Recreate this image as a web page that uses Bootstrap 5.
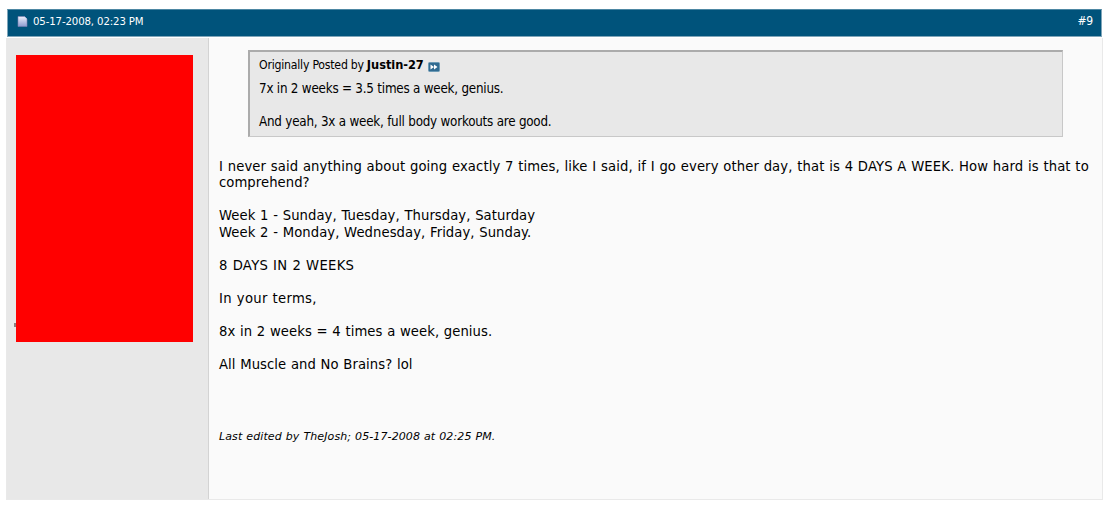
<!DOCTYPE html>
<html lang="en">

<head>
    <meta charset="UTF-8">
    <meta name="viewport" content="width=device-width, initial-scale=1.0">
    <title>Post #9</title>
    <link href="https://cdn.jsdelivr.net/npm/bootstrap@5.3.0/dist/css/bootstrap.min.css" rel="stylesheet">
    <style>
        body {
            background: #fff;
            color: #000;
            font-family: "DejaVu Sans", Verdana, sans-serif;
            overflow: hidden;
        }

        .post {
            width: 1097px;
            margin: 9px 0 0 6px;
        }

        .post-head {
            width: 1095px;
            height: 28px;
            margin: 0 0 1px 1px;
            padding: 0 8px 3px 9px;
            background: #00537b;
            border: 1px solid #7fa5b9;
            border-top-color: #4d87a3;
            color: #fff;
        }

        .tahoma {
            font-family: "DejaVu Sans Condensed", "DejaVu Sans", Tahoma, sans-serif;
            font-stretch: condensed;
        }

        .post-date {
            margin-left: 5px;
            padding-top: 1px;
            font-size: 11.3px;
            letter-spacing: -.12px;
        }

        .post-number {
            padding-bottom: 2px;
            font-size: 12px;
            letter-spacing: -.2px;
        }

        .post-body {
            height: 462px;
            background: #fafafa;
            border: 1px solid #e9e9e9;
            border-top: 0;
        }

        .user-info {
            width: 202px;
            padding: 17px 0 0 9px;
            background: #e8e8e8;
            border-right: 1px solid #d3d3d3;
        }

        .user-cover {
            width: 177px;
            height: 287px;
            background: #f00;
        }

        .speck {
            left: -2px;
            top: 268px;
            width: 2px;
            height: 4px;
            background: #8c8080;
        }

        .post-content {
            padding: 12px 10px 0 10px;
        }

        .quote {
            width: 815px;
            height: 87px;
            margin-left: 29px;
            padding: 5px 9px;
            background: #e8e8e8;
            border: 1px solid #c8c8c8;
            border-top: 2px solid #ababab;
            border-left: 2px solid #ababab;
            font-size: 13.3px;
            line-height: 16.5px;
        }

        .quote-by {
            font-size: 12.2px;
            letter-spacing: -.23px;
        }

        .quote-name {
            margin-left: 3px;
            font-size: 12.7px;
            letter-spacing: -.05px;
        }

        .quote-text {
            margin-top: 7px;
            letter-spacing: -.22px;
        }

        .message {
            margin-top: 21.5px;
            font-size: 13.2px;
            line-height: 16.5px;
            letter-spacing: .06px;
            word-spacing: .45px;
        }

        .wide {
            letter-spacing: .1px;
        }

        .caps {
            letter-spacing: .3px;
        }

        .edited {
            margin-top: 56px;
            font-size: 11px;
            line-height: 16px;
            letter-spacing: .1px;
            word-spacing: .4px;
        }
    </style>
</head>

<body>
    <div class="post">
        <div class="post-head d-flex align-items-center justify-content-between">
            <div class="d-flex align-items-center">
                <svg width="11" height="11" viewBox="0 0 11 11">
                    <defs>
                        <linearGradient id="page" x1="0" y1="0" x2="0" y2="1">
                            <stop offset="0" stop-color="#edf0fb" />
                            <stop offset="1" stop-color="#8d9bd0" />
                        </linearGradient>
                    </defs>
                    <path d="M1 .5H7.5L10 3v7.5H1z" fill="url(#page)" stroke="#8080b4" stroke-width=".6" />
                    <path d="M7.5 .5V3H10" fill="#d5dcf5" />
                </svg>
                <span class="post-date tahoma">05-17-2008, 02:23 PM</span>
            </div>
            <span class="post-number tahoma">#9</span>
        </div>

        <div class="post-body d-flex">
            <div class="user-info flex-shrink-0">
                <div class="user-cover position-relative">
                    <span class="speck position-absolute"></span>
                </div>
            </div>

            <div class="post-content flex-grow-1">
                <div class="quote tahoma">
                    <div class="d-flex align-items-center">
                        <span class="quote-by">Originally Posted by</span>
                        <strong class="quote-name">Justin-27</strong>
                        <svg width="12" height="10" viewBox="0 0 12 10" class="ms-1 mt-1">
                            <rect x=".5" y=".5" width="11" height="9" rx="1" fill="#316b91" stroke="#6c9ab5" />
                            <path d="M2.5 2.5 6 5 2.5 7.5zM6 2.5 9.5 5 6 7.5z" fill="#fff" />
                        </svg>
                    </div>
                    <div class="quote-text">
                        7x in 2 weeks = 3.5 times a week, genius.<br>
                        <br>
                        And yeah, 3x a week, full body workouts are good.
                    </div>
                </div>

                <div class="message">
                    <span class="wide">I never said anything about going exactly 7 times, like I said, if I go every other day, that is 4 DAYS A WEEK. How hard is that to</span><br>
                    comprehend?<br>
                    <br>
                    Week 1 - Sunday, Tuesday, Thursday, Saturday<br>
                    Week 2 - Monday, Wednesday, Friday, Sunday.<br>
                    <br>
                    <span class="caps">8 DAYS IN 2 WEEKS</span><br>
                    <br>
                    <span class="caps">In your terms,</span><br>
                    <br>
                    8x in 2 weeks = 4 times a week, genius.<br>
                    <br>
                    All Muscle and No Brains? lol
                </div>

                <div class="edited fst-italic">Last edited by TheJosh; 05-17-2008 at 02:25 PM.</div>
            </div>
        </div>
    </div>
    <script src="https://cdn.jsdelivr.net/npm/bootstrap@5.3.0/dist/js/bootstrap.bundle.min.js"></script>
</body>

</html>
